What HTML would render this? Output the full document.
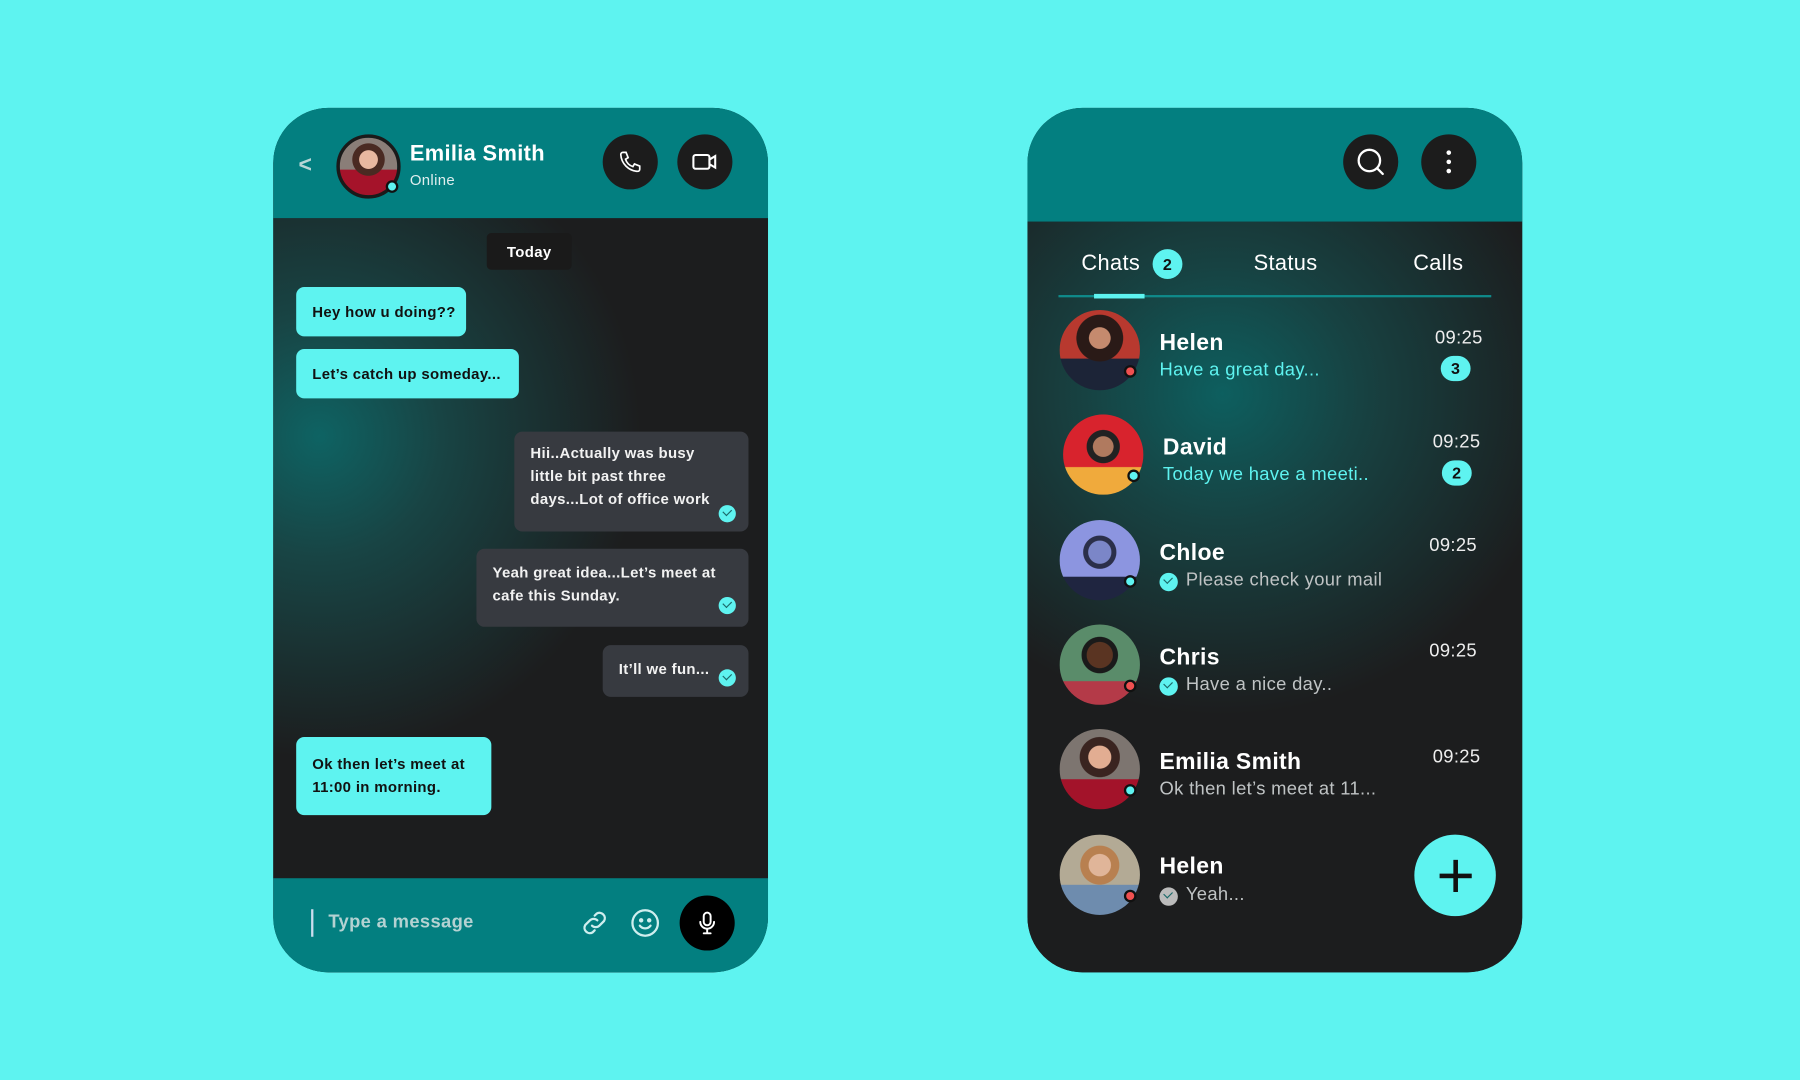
<!DOCTYPE html>
<html><head><meta charset="utf-8"><style>
*{margin:0;padding:0;box-sizing:border-box}
html,body{width:1800px;height:1080px;overflow:hidden;background:#5ef3f0;font-family:"Liberation Sans",sans-serif}
#s{position:absolute;left:0;top:0;width:1568px;height:941px;transform:scale(1.148);transform-origin:0 0;letter-spacing:0.3px}
.a{position:absolute}
.panel{position:absolute;top:94px;width:431px;height:753px;border-radius:48px;overflow:hidden;background:#1c1d1e}
.hd{position:absolute;left:0;top:0;width:431px;background:#037f80}
.cb{position:absolute;width:48px;height:48px;border-radius:50%;background:#1c1c1c;display:flex;align-items:center;justify-content:center}
.bub{position:absolute;border-radius:7px;font-size:13px;font-weight:bold;line-height:20px;padding:0 14px;white-space:nowrap}
.cy{background:#5ef3f0;color:#111}
.dk{background:#373a40;color:#f2f2f2}
.chk{position:absolute;width:15px;height:15px;border-radius:50%;background:#5ef3f0}
.chk:after{content:"";position:absolute;left:4px;top:3px;width:6px;height:4px;border-left:1.5px solid #1c6b6b;border-bottom:1.5px solid #1c6b6b;transform:rotate(-45deg)}
.av{position:absolute;width:70px;height:70px;border-radius:50%}
.dot{position:absolute;width:11px;height:11px;border-radius:50%;border:2.5px solid #111}
.nm{position:absolute;left:115px;font-size:20px;font-weight:bold;color:#fff}
.sb{position:absolute;left:115px;font-size:16px;color:#bfc3c4}
.tm{position:absolute;font-size:16px;color:#eee}
.bd{position:absolute;width:26px;height:22px;border-radius:11px;background:#5ef3f0;color:#111;font-size:14px;font-weight:bold;text-align:center;line-height:22px}
</style></head><body><div id="s">

<!-- LEFT -->
<div class="panel" style="left:238px">
 <div class="a" style="left:0;top:96px;width:431px;height:575px;background:radial-gradient(ellipse 280px 280px at 40px 190px,#0e6363 0%,#184444 38%,#1c1d1e 100%)"></div>
 <div class="hd" style="height:96px"></div>
 <div class="a" style="left:22px;top:39px;font-size:20px;font-weight:bold;color:#b7d6d6">&lt;</div>
 <div class="av" style="left:55px;top:23px;width:56px;height:56px;border:3px solid #1a1a1a;background:radial-gradient(circle at 50% 38%,#e9b8a0 0 20%,#4a2a22 21% 35%,transparent 36%),linear-gradient(180deg,#8a7e78 0 55%,#a5132a 56%)"></div>
 <div class="dot" style="left:98px;top:63px;background:#5ef3f0"></div>
 <div class="a" style="left:119px;top:30px;font-size:19px;font-weight:bold;color:#fff">Emilia Smith</div>
 <div class="a" style="left:119px;top:55px;font-size:13px;color:#dfeeee">Online</div>
 <div class="cb" style="left:287px;top:23px"><svg width="22" height="22" viewBox="0 0 24 24" fill="none" stroke="#fff" stroke-width="1.6"><path d="M5 3h3l2 5-2.5 1.5a11 11 0 0 0 7 7L16 14l5 2v3a2 2 0 0 1-2 2A17 17 0 0 1 3 5a2 2 0 0 1 2-2z"/></svg></div>
 <div class="cb" style="left:352px;top:23px"><svg width="24" height="24" viewBox="0 0 24 24" fill="none" stroke="#fff" stroke-width="1.8"><rect x="2" y="6" width="14" height="12" rx="2"/><path d="M16 10l5-3v10l-5-3z"/></svg></div>
 <div class="a" style="left:186px;top:109px;width:74px;height:32px;background:#1a1a1a;border-radius:4px;color:#fff;font-size:13px;font-weight:bold;text-align:center;line-height:34px">Today</div>
 <div class="bub cy" style="left:20px;top:156px;width:148px;height:43px;line-height:43px">Hey how u doing??</div>
 <div class="bub cy" style="left:20px;top:210px;width:194px;height:43px;line-height:43px">Let’s catch up someday...</div>
 <div class="bub dk" style="left:210px;top:282px;width:204px;height:87px;padding-top:9px">Hii..Actually was busy<br>little bit past three<br>days...Lot of office work</div>
 <div class="chk" style="left:388px;top:346px"></div>
 <div class="bub dk" style="left:177px;top:384px;width:237px;height:68px;padding-top:11px">Yeah great idea...Let’s meet at<br>cafe this Sunday.</div>
 <div class="chk" style="left:388px;top:426px"></div>
 <div class="bub dk" style="left:287px;top:468px;width:127px;height:45px;line-height:42px">It’ll we fun...</div>
 <div class="chk" style="left:388px;top:489px"></div>
 <div class="bub cy" style="left:20px;top:548px;width:170px;height:68px;padding-top:14px">Ok then let’s meet at<br>11:00 in morning.</div>
 <div class="hd" style="top:671px;height:82px"></div>
 <div class="a" style="left:33px;top:698px;width:2px;height:24px;background:#cde"></div>
 <div class="a" style="left:48px;top:701px;font-size:16px;font-weight:bold;color:#b4d2d2">Type a message</div>
 <svg class="a" style="left:266px;top:696px" width="28" height="28" viewBox="0 0 24 24" fill="none" stroke="#cfeeee" stroke-width="1.7" stroke-linecap="round"><path d="M10 14a4 4 0 0 0 5.5 0l3.5-3.5a4 4 0 0 0-5.5-5.5L12 6.5"/><path d="M14 10a4 4 0 0 0-5.5 0L5 13.5a4 4 0 0 0 5.5 5.5L12 17.5"/></svg>
 <svg class="a" style="left:310px;top:696px" width="28" height="28" viewBox="0 0 24 24" fill="none" stroke="#cfeeee" stroke-width="1.7" stroke-linecap="round"><circle cx="12" cy="12" r="9.5"/><path d="M8 14a5 5 0 0 0 8 0"/><circle cx="9" cy="10" r=".8" fill="#cfeeee"/><circle cx="15" cy="10" r=".8" fill="#cfeeee"/></svg>
 <div class="cb" style="left:354px;top:686px;background:#000"><svg width="24" height="24" viewBox="0 0 24 24" fill="none" stroke="#fff" stroke-width="1.7" stroke-linecap="round"><rect x="9" y="3" width="6" height="11" rx="3"/><path d="M6 11a6 6 0 0 0 12 0M12 17v3M9 21h6"/></svg></div>
</div>

<!-- RIGHT -->
<div class="panel" style="left:895px">
 <div class="a" style="left:0;top:99px;width:431px;height:654px;background:radial-gradient(ellipse 300px 280px at 170px 150px,#0d5f5f 0%,#174242 40%,#1c1d1e 100%)"></div>
 <div class="hd" style="height:99px"></div>
 <div class="cb" style="left:275px;top:23px"><svg width="28" height="28" viewBox="0 0 24 24" fill="none" stroke="#fff" stroke-width="1.7" stroke-linecap="round"><circle cx="11" cy="11" r="8"/><path d="M17 17l4 4"/></svg></div>
 <div class="cb" style="left:343px;top:23px"><svg width="6" height="22" viewBox="0 0 6 22"><circle cx="3" cy="3" r="2" fill="#fff"/><circle cx="3" cy="11" r="2" fill="#fff"/><circle cx="3" cy="19" r="2" fill="#fff"/></svg></div>
 <div class="a" style="left:47px;top:125px;font-size:19px;color:#fff">Chats</div>
 <div class="bd" style="left:109px;top:123px;width:26px;height:26px;border-radius:13px;line-height:26px">2</div>
 <div class="a" style="left:197px;top:125px;font-size:19px;color:#fff">Status</div>
 <div class="a" style="left:336px;top:125px;font-size:19px;color:#fff">Calls</div>
 <div class="a" style="left:27px;top:163px;width:377px;height:2px;background:#0f8a8a"></div>
 <div class="a" style="left:58px;top:162px;width:44px;height:4px;background:#5ef3f0"></div>

 <div class="a" style="left:28px;top:176px;width:400px;height:80px">
  <div class="av" style="left:0;top:0;background:radial-gradient(circle at 50% 35%,#c58a6e 0 16%,#2a1a17 17% 35%,transparent 36%),linear-gradient(180deg,#b8392f 0 60%,#1c2437 61%)"></div>
  <div class="dot" style="left:56px;top:48px;background:#f05050"></div>
  <div class="nm" style="left:87px;top:18px">Helen</div>
  <div class="sb" style="left:87px;top:44px;color:#5ef3f0">Have a great day...</div>
  <div class="tm" style="left:327px;top:16px">09:25</div>
  <div class="bd" style="left:332px;top:40px">3</div>
 </div>
 <div class="a" style="left:28px;top:267px;width:400px;height:80px">
  <div class="av" style="left:3px;top:0;background:radial-gradient(circle at 50% 40%,#b07a5f 0 16%,#222 17% 26%,transparent 27%),linear-gradient(180deg,#d8232d 0 65%,#f0aa3c 66%)"></div>
  <div class="dot" style="left:59px;top:48px;background:#5ef3f0"></div>
  <div class="nm" style="left:90px;top:18px">David</div>
  <div class="sb" style="left:90px;top:44px;color:#5ef3f0">Today we have a meeti..</div>
  <div class="tm" style="left:325px;top:16px">09:25</div>
  <div class="bd" style="left:333px;top:40px">2</div>
 </div>
 <div class="a" style="left:28px;top:359px;width:400px;height:80px">
  <div class="av" style="left:0;top:0;background:radial-gradient(circle at 50% 40%,#7b86c8 0 18%,#2b2f4a 19% 26%,transparent 27%),linear-gradient(180deg,#8c95e0 0 70%,#1f2540 71%)"></div>
  <div class="dot" style="left:56px;top:48px;background:#5ef3f0"></div>
  <div class="nm" style="left:87px;top:18px">Chloe</div>
  <div class="chk" style="left:87px;top:46px;width:16px;height:16px"></div>
  <div class="sb" style="left:110px;top:44px">Please check your mail</div>
  <div class="tm" style="left:322px;top:14px">09:25</div>
 </div>
 <div class="a" style="left:28px;top:450px;width:400px;height:80px">
  <div class="av" style="left:0;top:0;background:radial-gradient(circle at 50% 38%,#5a3422 0 20%,#1a1a1a 21% 28%,transparent 29%),linear-gradient(180deg,#5a8c6a 0 70%,#b43a48 71%)"></div>
  <div class="dot" style="left:56px;top:48px;background:#f05050"></div>
  <div class="nm" style="left:87px;top:18px">Chris</div>
  <div class="chk" style="left:87px;top:46px;width:16px;height:16px"></div>
  <div class="sb" style="left:110px;top:44px">Have a nice day..</div>
  <div class="tm" style="left:322px;top:15px">09:25</div>
 </div>
 <div class="a" style="left:28px;top:541px;width:400px;height:80px">
  <div class="av" style="left:0;top:0;background:radial-gradient(circle at 50% 35%,#e2ad92 0 17%,#3a2420 18% 30%,transparent 31%),linear-gradient(180deg,#7d7570 0 62%,#a3132a 63%)"></div>
  <div class="dot" style="left:56px;top:48px;background:#5ef3f0"></div>
  <div class="nm" style="left:87px;top:18px">Emilia Smith</div>
  <div class="sb" style="left:87px;top:44px">Ok then let’s meet at 11...</div>
  <div class="tm" style="left:325px;top:16px">09:25</div>
 </div>
 <div class="a" style="left:28px;top:633px;width:400px;height:80px">
  <div class="av" style="left:0;top:0;background:radial-gradient(circle at 50% 38%,#e0b599 0 17%,#b88050 18% 30%,transparent 31%),linear-gradient(180deg,#b3aa95 0 62%,#6e8cae 63%)"></div>
  <div class="dot" style="left:56px;top:48px;background:#f05050"></div>
  <div class="nm" style="left:87px;top:17px">Helen</div>
  <div class="chk" style="left:87px;top:46px;width:16px;height:16px;background:#bbb"></div>
  <div class="sb" style="left:110px;top:44px">Yeah...</div>
 </div>
 <div class="a" style="left:337px;top:633px;width:71px;height:71px;border-radius:50%;background:#5ef3f0"></div>
 <div class="a" style="left:359px;top:667px;width:28px;height:4px;background:#111"></div>
 <div class="a" style="left:371px;top:655px;width:4px;height:28px;background:#111"></div>
</div>
</div></body></html>
